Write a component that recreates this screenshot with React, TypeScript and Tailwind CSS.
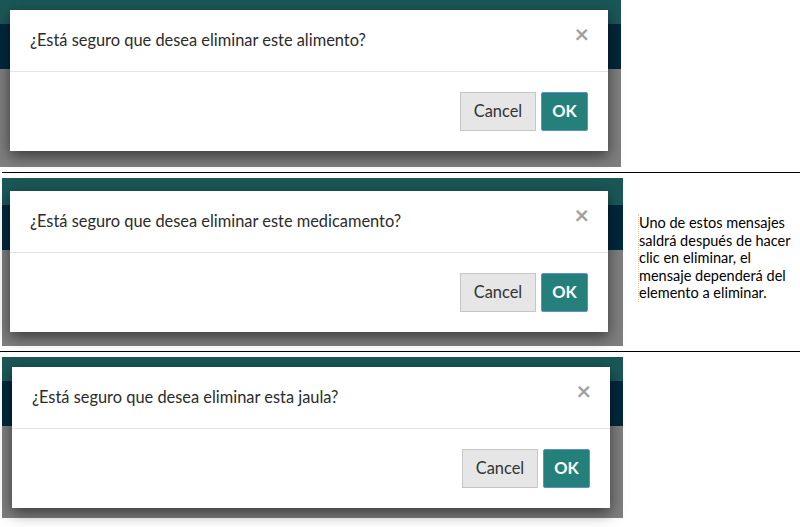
import React from 'react'

interface ShotProps {
  message: string
  className: string
  modalClass: string
}

function ConfirmShot({ message, className, modalClass }: ShotProps) {
  return (
    <div className={`relative w-[621px] shrink-0 bg-[#7f7f7f] ${className}`}>
      <div className="h-[24px] bg-[#1b5757]" />
      <div className="h-[45px] bg-[#02283c]" />
      <div
        className={`absolute w-[598px] bg-white shadow-[0_5px_14px_rgba(0,0,0,0.55)] ${modalClass}`}
      >
        <div className="flex h-[62px] items-center justify-between border-b border-[#e5e5e5] pl-[20px] pr-[19px]">
          <span className="text-[16.4px] text-[#2b2b2b]">{message}</span>
          <span className="-mt-[14px] text-[25px] font-bold leading-none text-[#a0a0a0]">×</span>
        </div>
        <div className="flex h-[79px] items-center justify-end gap-[5px] pr-[20px]">
          <button className="h-[39px] w-[76px] border border-[#c6c6c6] bg-[#e6e6e6] text-[16.4px] text-[#333]">
            Cancel
          </button>
          <button className="h-[39px] w-[47px] rounded-[2px] border border-[#5b8fd6] bg-[#25807c] text-[16.4px] font-bold text-white">
            OK
          </button>
        </div>
      </div>
    </div>
  )
}

export default function App() {
  return (
    <div className="h-[527px] w-[800px] overflow-hidden bg-white font-['Lato',sans-serif]">
      <div className="flex">
        <ConfirmShot
          message="¿Está seguro que desea eliminar este alimento?"
          className="h-[167px]"
          modalClass="left-[10px] top-[10px] h-[141px]"
        />
      </div>
      <div className="ml-[2px] mt-[5px] h-px bg-black" />
      <div className="mt-[5px] flex">
        <ConfirmShot
          message="¿Está seguro que desea eliminar este medicamento?"
          className="ml-[2px] h-[168px] [&>div:first-child]:h-[27px]"
          modalClass="left-[8px] top-[13px] h-[141px]"
        />
        <div className="flex items-center pl-[15px]">
          <p className="-mt-[8px] border-l border-dotted border-[#f0c89a] text-[14.5px] leading-[17.5px] text-black">
            Uno de estos mensajes
            <br />
            saldrá después de hacer
            <br />
            clic en eliminar, el
            <br />
            mensaje dependerá del
            <br />
            elemento a eliminar.
          </p>
        </div>
      </div>
      <div className="mt-[5px] h-px bg-black" />
      <div className="mt-[5px] flex">
        <ConfirmShot
          message="¿Está seguro que desea eliminar esta jaula?"
          className="ml-[2px] h-[161px]"
          modalClass="left-[10px] top-[10px] h-[141px]"
        />
      </div>
    </div>
  )
}
